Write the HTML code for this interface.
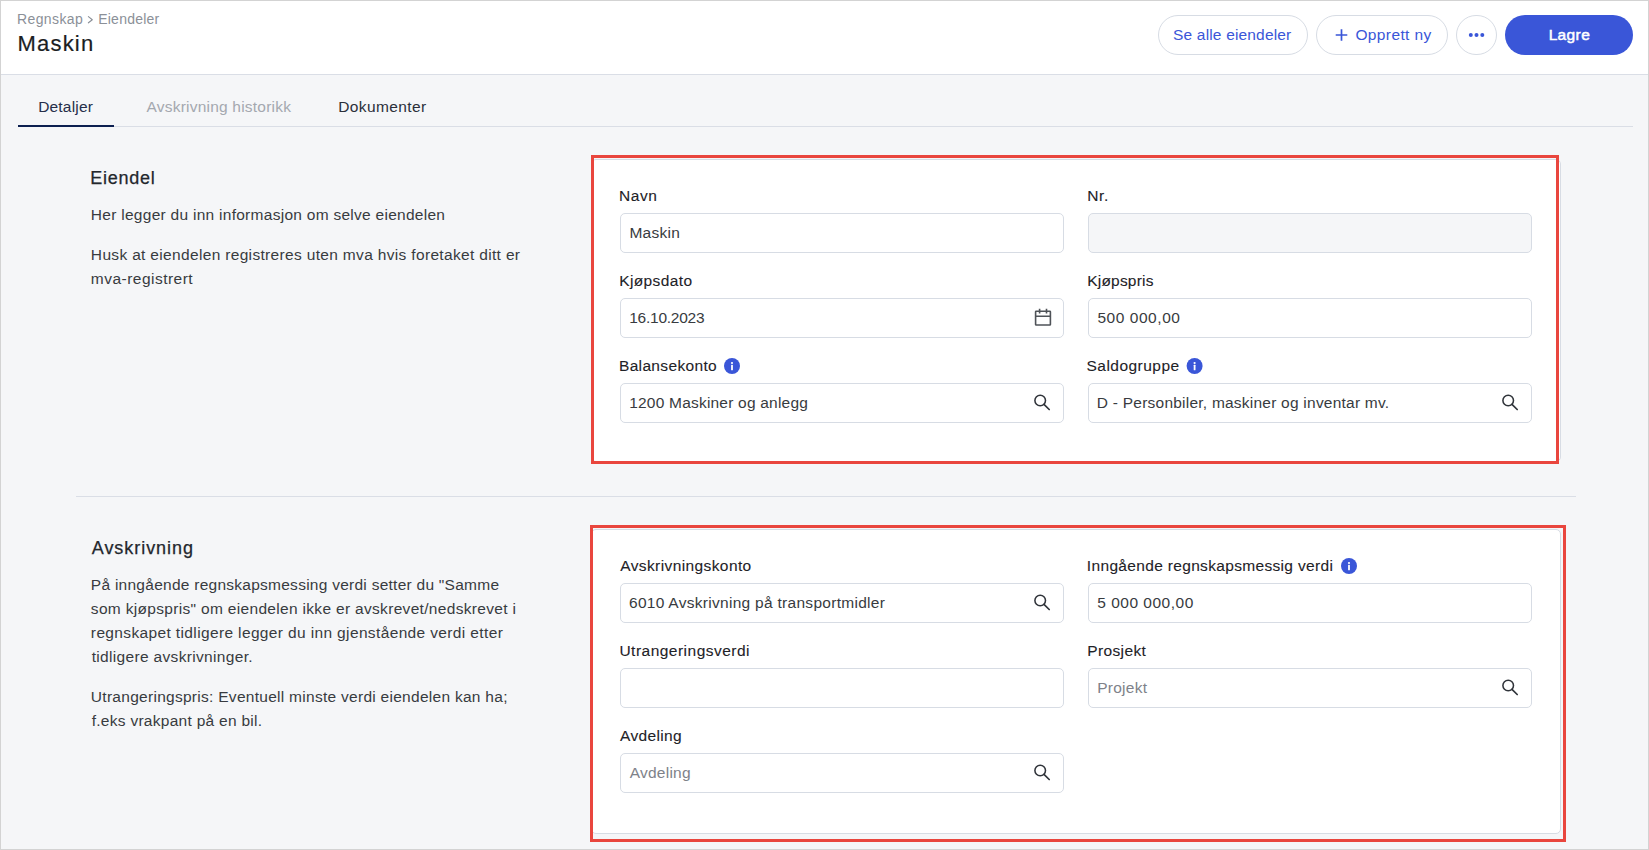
<!DOCTYPE html><html><head><meta charset="utf-8"><style>
html,body{margin:0;padding:0}
body{width:1649px;height:850px;position:relative;overflow:hidden;background:#f5f6f8;font-family:"Liberation Sans",sans-serif}
.t{position:absolute;white-space:nowrap;line-height:20px;height:20px}
.b{position:absolute;box-sizing:border-box}
svg{position:absolute;overflow:visible}
</style></head><body>
<div class=b style='left:0;top:0;width:1649px;height:75px;background:#fff;border-bottom:1px solid #dadee6'></div><div id=t0 class=t style="left:17.08px;top:9px;font-size:14px;color:#8b9098;font-weight:400;letter-spacing:0.371px;">Regnskap</div>
<svg style='left:0;top:0' width='1649' height='75'><path d='M88.4 16.6 L92.3 19.7 L88.4 22.8' fill='none' stroke='#8b9098' stroke-width='1.1' stroke-linecap='round' stroke-linejoin='round'/></svg><div id=t1 class=t style="left:98.20px;top:9px;font-size:14px;color:#8b9098;font-weight:400;letter-spacing:0.237px;">Eiendeler</div>
<div id=t2 class=t style="left:17.52px;top:34px;font-size:22px;color:#1b1e23;font-weight:400;letter-spacing:1.192px;-webkit-text-stroke:0.2px #1b1e23;">Maskin</div>
<div class=b style='left:1158px;top:15px;width:150px;height:40px;border:1px solid #d7dce4;border-radius:20px;background:#fff'></div><div id=t3 class=t style="left:1173.08px;top:25px;font-size:15.5px;color:#3a56d8;font-weight:400;letter-spacing:0.170px;">Se alle eiendeler</div>
<div class=b style='left:1316px;top:15px;width:132px;height:40px;border:1px solid #d7dce4;border-radius:20px;background:#fff'></div><svg style='left:0;top:0' width='1649' height='75'><path d='M1341.5 29.2 V40.8 M1335.7 35 H1347.3' stroke='#3a56d8' stroke-width='1.7'/></svg><div id=t4 class=t style="left:1355.42px;top:25px;font-size:15.5px;color:#3a56d8;font-weight:400;letter-spacing:0.387px;">Opprett ny</div>
<div class=b style='left:1456px;top:15px;width:41px;height:40px;border:1px solid #d7dce4;border-radius:20px;background:#fff'></div><svg style='left:0;top:0' width='1649' height='75'><circle cx='1470.8' cy='35' r='2' fill='#3a56d8'/><circle cx='1476.5' cy='35' r='2' fill='#3a56d8'/><circle cx='1482.3' cy='35' r='2' fill='#3a56d8'/></svg><div class=b style='left:1505px;top:15px;width:128px;height:40px;border-radius:20px;background:#3a56d8'></div><div id=t5 class=t style="left:1548.64px;top:25px;font-size:15.5px;color:#ffffff;font-weight:400;letter-spacing:0.375px;-webkit-text-stroke:0.5px #ffffff;">Lagre</div>
<div class=b style='left:18px;top:126px;width:1615px;height:1px;background:#dadee6'></div><div class=b style='left:18px;top:125px;width:96px;height:2px;background:#0c1f50'></div><div id=t6 class=t style="left:38.20px;top:97px;font-size:15.5px;color:#262e4a;font-weight:400;letter-spacing:0.180px;">Detaljer</div>
<div id=t7 class=t style="left:146.56px;top:97px;font-size:15.5px;color:#a4a8af;font-weight:400;letter-spacing:0.212px;">Avskrivning historikk</div>
<div id=t8 class=t style="left:338.18px;top:97px;font-size:15.5px;color:#2b2f3a;font-weight:400;letter-spacing:0.402px;">Dokumenter</div>
<div class=b style='left:76px;top:496px;width:1500px;height:1px;background:#dadee6'></div><div id=t9 class=t style="left:90.18px;top:168px;font-size:18px;color:#23272d;font-weight:400;letter-spacing:0.770px;-webkit-text-stroke:0.25px #23272d;">Eiendel</div>
<div id=t10 class=t style="left:90.86px;top:205px;font-size:15.5px;color:#383b40;font-weight:400;letter-spacing:0.275px;">Her legger du inn informasjon om selve eiendelen</div>
<div id=t11 class=t style="left:90.86px;top:245px;font-size:15.5px;color:#383b40;font-weight:400;letter-spacing:0.332px;">Husk at eiendelen registreres uten mva hvis foretaket ditt er</div>
<div id=t12 class=t style="left:90.86px;top:269px;font-size:15.5px;color:#383b40;font-weight:400;letter-spacing:0.472px;">mva-registrert</div>
<div id=t13 class=t style="left:91.78px;top:538px;font-size:18px;color:#23272d;font-weight:400;letter-spacing:0.948px;-webkit-text-stroke:0.25px #23272d;">Avskrivning</div>
<div id=t14 class=t style="left:90.86px;top:575px;font-size:15.5px;color:#383b40;font-weight:400;letter-spacing:0.260px;">På inngående regnskapsmessing verdi setter du &quot;Samme</div>
<div id=t15 class=t style="left:90.86px;top:599px;font-size:15.5px;color:#383b40;font-weight:400;letter-spacing:0.317px;">som kjøpspris&quot; om eiendelen ikke er avskrevet/nedskrevet i</div>
<div id=t16 class=t style="left:90.86px;top:623px;font-size:15.5px;color:#383b40;font-weight:400;letter-spacing:0.364px;">regnskapet tidligere legger du inn gjenstående verdi etter</div>
<div id=t17 class=t style="left:91.66px;top:647px;font-size:15.5px;color:#383b40;font-weight:400;letter-spacing:0.330px;">tidligere avskrivninger.</div>
<div id=t18 class=t style="left:90.86px;top:687px;font-size:15.5px;color:#383b40;font-weight:400;letter-spacing:0.280px;">Utrangeringspris: Eventuell minste verdi eiendelen kan ha;</div>
<div id=t19 class=t style="left:91.66px;top:711px;font-size:15.5px;color:#383b40;font-weight:400;letter-spacing:0.280px;">f.eks vrakpant på en bil.</div>
<div class=b style='left:591px;top:159px;width:970px;height:303px;background:#fff;border:1px solid #d7dce4;border-radius:5px'></div><div class=b style='left:591px;top:529px;width:970px;height:305px;background:#fff;border:1px solid #d7dce4;border-radius:5px'></div><div id=t20 class=t style="left:619.08px;top:186px;font-size:15.5px;color:#1e2227;font-weight:400;letter-spacing:0.573px;-webkit-text-stroke:0.1px #1e2227;">Navn</div>
<div id=t21 class=t style="left:1087.20px;top:186px;font-size:15.5px;color:#1e2227;font-weight:400;letter-spacing:0.640px;-webkit-text-stroke:0.1px #1e2227;">Nr.</div>
<div class=b style='left:620px;top:213px;width:444px;height:40px;background:#fff;border:1px solid #d7dce4;border-radius:5px'></div>
<div class=b style='left:1088px;top:213px;width:444px;height:40px;background:#f5f6f8;border:1px solid #d7dce4;border-radius:5px'></div>
<div id=t22 class=t style="left:629.42px;top:223px;font-size:15.5px;color:#383b40;font-weight:400;letter-spacing:0.276px;">Maskin</div>
<div id=t23 class=t style="left:619.20px;top:271px;font-size:15.5px;color:#1e2227;font-weight:400;letter-spacing:0.380px;-webkit-text-stroke:0.1px #1e2227;">Kjøpsdato</div>
<div id=t24 class=t style="left:1087.20px;top:271px;font-size:15.5px;color:#1e2227;font-weight:400;letter-spacing:0.213px;-webkit-text-stroke:0.1px #1e2227;">Kjøpspris</div>
<div class=b style='left:620px;top:298px;width:444px;height:40px;background:#fff;border:1px solid #d7dce4;border-radius:5px'></div>
<div class=b style='left:1088px;top:298px;width:444px;height:40px;background:#fff;border:1px solid #d7dce4;border-radius:5px'></div>
<div id=t25 class=t style="left:629.20px;top:308px;font-size:15.5px;color:#383b40;font-weight:400;letter-spacing:-0.242px;">16.10.2023</div>
<div id=t26 class=t style="left:1097.42px;top:308px;font-size:15.5px;color:#383b40;font-weight:400;letter-spacing:0.549px;">500 000,00</div>
<svg style='left:0;top:0' width='1649' height='850'><rect x='1035.6' y='311.2' width='14.8' height='13.8' rx='0.6' fill='none' stroke='#4f5358' stroke-width='1.6'/><path d='M1035.6 316.3 H1050.4 M1039.6 308.7 V313.6 M1046.5 308.7 V313.6' stroke='#4f5358' stroke-width='1.6'/></svg>
<div id=t27 class=t style="left:618.96px;top:356px;font-size:15.5px;color:#1e2227;font-weight:400;letter-spacing:0.349px;-webkit-text-stroke:0.1px #1e2227;">Balansekonto</div>
<svg style='left:0;top:0' width='1649' height='850'><circle cx='732' cy='366' r='8' fill='#3a56d8'/><circle cx='732' cy='363.0' r='1.1' fill='#fff'/><rect x='731.1' y='364.7' width='1.8' height='5.6' rx='0.5' fill='#fff'/></svg>
<div id=t28 class=t style="left:1086.52px;top:356px;font-size:15.5px;color:#1e2227;font-weight:400;letter-spacing:0.472px;-webkit-text-stroke:0.1px #1e2227;">Saldogruppe</div>
<svg style='left:0;top:0' width='1649' height='850'><circle cx='1194.6' cy='366' r='8' fill='#3a56d8'/><circle cx='1194.6' cy='363.0' r='1.1' fill='#fff'/><rect x='1193.6999999999998' y='364.7' width='1.8' height='5.6' rx='0.5' fill='#fff'/></svg>
<div class=b style='left:620px;top:383px;width:444px;height:40px;background:#fff;border:1px solid #d7dce4;border-radius:5px'></div>
<div class=b style='left:1088px;top:383px;width:444px;height:40px;background:#fff;border:1px solid #d7dce4;border-radius:5px'></div>
<div id=t29 class=t style="left:629.20px;top:393px;font-size:15.5px;color:#383b40;font-weight:400;letter-spacing:0.209px;">1200 Maskiner og anlegg</div>
<div id=t30 class=t style="left:1096.86px;top:393px;font-size:15.5px;color:#383b40;font-weight:400;letter-spacing:0.229px;">D - Personbiler, maskiner og inventar mv.</div>
<svg style='left:0;top:0' width='1649' height='850'><circle cx='1040.2' cy='400.5' r='5.3' fill='none' stroke='#30343a' stroke-width='1.55'/><path d='M1044.0 404.3 L1049.2 409.5' stroke='#30343a' stroke-width='1.7' stroke-linecap='round'/></svg>
<svg style='left:0;top:0' width='1649' height='850'><circle cx='1508.2' cy='400.5' r='5.3' fill='none' stroke='#30343a' stroke-width='1.55'/><path d='M1512.0 404.3 L1517.2 409.5' stroke='#30343a' stroke-width='1.7' stroke-linecap='round'/></svg>
<div id=t31 class=t style="left:620.22px;top:556px;font-size:15.5px;color:#1e2227;font-weight:400;letter-spacing:0.398px;-webkit-text-stroke:0.1px #1e2227;">Avskrivningskonto</div>
<div id=t32 class=t style="left:1086.86px;top:556px;font-size:15.5px;color:#1e2227;font-weight:400;letter-spacing:0.331px;-webkit-text-stroke:0.1px #1e2227;">Inngående regnskapsmessig verdi</div>
<svg style='left:0;top:0' width='1649' height='850'><circle cx='1349' cy='566' r='8' fill='#3a56d8'/><circle cx='1349' cy='563.0' r='1.1' fill='#fff'/><rect x='1348.1' y='564.7' width='1.8' height='5.6' rx='0.5' fill='#fff'/></svg>
<div class=b style='left:620px;top:583px;width:444px;height:40px;background:#fff;border:1px solid #d7dce4;border-radius:5px'></div>
<div class=b style='left:1088px;top:583px;width:444px;height:40px;background:#fff;border:1px solid #d7dce4;border-radius:5px'></div>
<div id=t33 class=t style="left:628.98px;top:593px;font-size:15.5px;color:#383b40;font-weight:400;letter-spacing:0.289px;">6010 Avskrivning på transportmidler</div>
<div id=t34 class=t style="left:1097.20px;top:593px;font-size:15.5px;color:#383b40;font-weight:400;letter-spacing:0.509px;">5 000 000,00</div>
<svg style='left:0;top:0' width='1649' height='850'><circle cx='1040.2' cy='600.5' r='5.3' fill='none' stroke='#30343a' stroke-width='1.55'/><path d='M1044.0 604.3 L1049.2 609.5' stroke='#30343a' stroke-width='1.7' stroke-linecap='round'/></svg>
<div id=t35 class=t style="left:619.42px;top:641px;font-size:15.5px;color:#1e2227;font-weight:400;letter-spacing:0.489px;-webkit-text-stroke:0.1px #1e2227;">Utrangeringsverdi</div>
<div id=t36 class=t style="left:1087.20px;top:641px;font-size:15.5px;color:#1e2227;font-weight:400;letter-spacing:0.389px;-webkit-text-stroke:0.1px #1e2227;">Prosjekt</div>
<div class=b style='left:620px;top:668px;width:444px;height:40px;background:#fff;border:1px solid #d7dce4;border-radius:5px'></div>
<div class=b style='left:1088px;top:668px;width:444px;height:40px;background:#fff;border:1px solid #d7dce4;border-radius:5px'></div>
<div id=t37 class=t style="left:1097.20px;top:678px;font-size:15.5px;color:#7e8289;font-weight:400;letter-spacing:0.267px;">Projekt</div>
<svg style='left:0;top:0' width='1649' height='850'><circle cx='1508.2' cy='685.5' r='5.3' fill='none' stroke='#30343a' stroke-width='1.55'/><path d='M1512.0 689.3 L1517.2 694.5' stroke='#30343a' stroke-width='1.7' stroke-linecap='round'/></svg>
<div id=t38 class=t style="left:620.00px;top:726px;font-size:15.5px;color:#1e2227;font-weight:400;letter-spacing:0.337px;-webkit-text-stroke:0.1px #1e2227;">Avdeling</div>
<div class=b style='left:620px;top:753px;width:444px;height:40px;background:#fff;border:1px solid #d7dce4;border-radius:5px'></div>
<div id=t39 class=t style="left:629.78px;top:763px;font-size:15.5px;color:#7e8289;font-weight:400;letter-spacing:0.226px;">Avdeling</div>
<svg style='left:0;top:0' width='1649' height='850'><circle cx='1040.2' cy='770.5' r='5.3' fill='none' stroke='#30343a' stroke-width='1.55'/><path d='M1044.0 774.3 L1049.2 779.5' stroke='#30343a' stroke-width='1.7' stroke-linecap='round'/></svg>
<div class=b style='left:591px;top:155px;width:968px;height:309px;border:3px solid #e9463e'></div><div class=b style='left:590px;top:525px;width:976px;height:317px;border:3px solid #e9463e'></div><div class=b style='left:0;top:0;width:1649px;height:850px;border:1px solid #d3d3d3'></div></body></html>
